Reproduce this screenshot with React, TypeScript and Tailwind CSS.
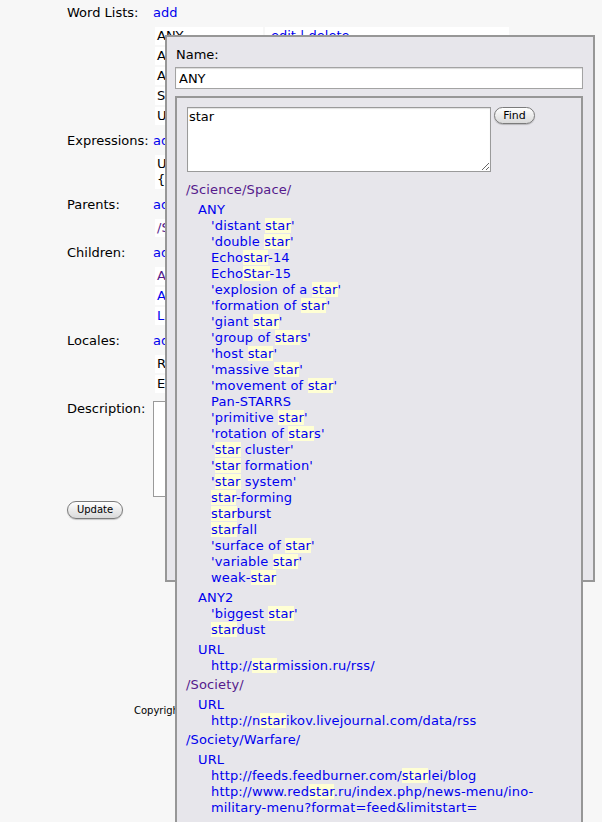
import React from "react";

const LINK = "text-[#0000ee]";
const VISITED = "text-[#551a8b]";

interface WordList {
  name: string;
  words: string[];
}

interface Category {
  path: string;
  visited: boolean;
  lists: WordList[];
}

const TREE: Category[] = [
  {
    path: "/Science/Space/",
    visited: true,
    lists: [
      {
        name: "ANY",
        words: [
          "'distant star'",
          "'double star'",
          "Echostar-14",
          "EchoStar-15",
          "'explosion of a star'",
          "'formation of star'",
          "'giant star'",
          "'group of stars'",
          "'host star'",
          "'massive star'",
          "'movement of star'",
          "Pan-STARRS",
          "'primitive star'",
          "'rotation of stars'",
          "'star cluster'",
          "'star formation'",
          "'star system'",
          "star-forming",
          "starburst",
          "starfall",
          "'surface of star'",
          "'variable star'",
          "weak-star",
        ],
      },
      { name: "ANY2", words: ["'biggest star'", "stardust"] },
      { name: "URL", words: ["http://starmission.ru/rss/"] },
    ],
  },
  {
    path: "/Society/",
    visited: true,
    lists: [{ name: "URL", words: ["http://nstarikov.livejournal.com/data/rss"] }],
  },
  {
    path: "/Society/Warfare/",
    visited: false,
    lists: [
      {
        name: "URL",
        words: [
          "http://feeds.feedburner.com/starlei/blog",
          "http://www.redstar.ru/index.php/news-menu/ino-military-menu?format=feed&limitstart=",
        ],
      },
    ],
  },
];

// highlight the searched term, the way the find result shows it
function Mark({ text }: { text: string }) {
  if (text === "Pan-STARRS") return <>{text}</>;
  const i = text.toLowerCase().indexOf("star");
  if (i < 0) return <>{text}</>;
  return (
    <>
      {text.slice(0, i)}
      <span className="bg-[#ffffd4]">{text.slice(i, i + 4)}</span>
      {text.slice(i + 4)}
    </>
  );
}

type Cell = { text: string; cls?: string };

function Section({ label, rows, widths }: { label: string; rows: Cell[][]; widths: string[] }) {
  return (
    <div className="mb-[6px] grid grid-cols-[86px_1fr]">
      <div>{label}</div>
      <div>
        <a className={LINK}>add</a>
        <table className="mt-[4px] border-separate border-spacing-[2px]">
          <tbody>
            {rows.map((r, i) => (
              <tr key={i}>
                {r.map((c, j) => (
                  <td key={j} className={`bg-white px-[2px] py-[1px] align-top ${widths[j]} ${c.cls ?? ""}`}>
                    {c.text.split("\n").map((line, k) => (
                      <div key={k}>{line}</div>
                    ))}
                  </td>
                ))}
              </tr>
            ))}
          </tbody>
        </table>
      </div>
    </div>
  );
}

function FindDialog() {
  return (
    <div className="absolute left-[165px] top-[35px] h-[547px] w-[430px] border-2 border-[#979797] bg-[#e7e6eb] pl-[8px] pt-[10px]">
      <div className="pl-[1px]">Name:</div>
      <input
        defaultValue="ANY"
        className="mt-[4px] block h-[22px] w-[408px] border border-[#a3a3a3] bg-white px-[3px] text-[13px] shadow-[inset_0_1px_1px_rgba(0,0,0,0.15)] outline-none"
      />
      <div className="mt-[7px] w-[408px] border-2 border-[#979797] bg-[#e7e6eb] pb-[10px] pl-[9px] pt-[9px]">
        <div className="flex items-start">
          <textarea
            defaultValue="star"
            className="ml-[1px] block h-[65px] w-[304px] border border-[#9a9a9a] bg-white px-[1px] pt-[1px] text-[13px] leading-[16px] shadow-[inset_0_1px_1px_rgba(0,0,0,0.12)] outline-none"
          />
          <button className="ml-[3px] h-[17px] w-[41px] rounded-full border border-[#7b7b7b] bg-linear-to-b from-white to-[#d9d9d9] text-[11px] leading-[15px] text-black shadow-[0_1px_1px_rgba(0,0,0,0.2)]">
            Find
          </button>
        </div>
        <div className="mt-[10px] tracking-[0.15px]">
          {TREE.map((cat, ci) => (
            <div key={cat.path} className={ci > 0 ? "mt-[3px]" : ""}>
              <a className={cat.visited ? VISITED : LINK}>{cat.path}</a>
              {cat.lists.map((l, li) => (
                <div key={li} className="mt-[4px]">
                  <div className={`ml-[12px] ${LINK}`}>{l.name}</div>
                  {l.words.map((w) => (
                    <div key={w} className={`ml-[25px] pr-[6px] ${LINK}`}>
                      <Mark text={w} />
                    </div>
                  ))}
                </div>
              ))}
            </div>
          ))}
        </div>
      </div>
    </div>
  );
}

export default function App() {
  return (
    <div className="relative h-[822px] overflow-hidden bg-[#f7f7f7] font-['DejaVu_Sans',sans-serif] text-[13px] leading-[16px] text-black">
      <div className="pl-[67px] pt-[5px]">
        <Section
          label="Word Lists:"
          widths={["w-[108px]", "w-[244px] pl-[6px]"]}
          rows={[
            [{ text: "ANY" }, { text: "edit | delete", cls: LINK }],
            [{ text: "ANY2" }, { text: "edit | delete", cls: LINK }],
            [{ text: "ANY3" }, { text: "edit | delete", cls: LINK }],
            [{ text: "SPACE" }, { text: "edit | delete", cls: LINK }],
            [{ text: "URL" }, { text: "edit | delete", cls: LINK }],
          ]}
        />
        <Section
          label="Expressions:"
          widths={["w-[300px]"]}
          rows={[[{ text: "URL ANY\n{ANY2}" }]]}
        />
        <Section label="Parents:" widths={["w-[200px]"]} rows={[[{ text: "/Science/", cls: VISITED }]]} />
        <Section
          label="Children:"
          widths={["w-[200px]"]}
          rows={[
            [{ text: "Astronomy", cls: VISITED }],
            [{ text: "Astronautics", cls: LINK }],
            [{ text: "Launches", cls: LINK }],
          ]}
        />
        <Section
          label="Locales:"
          widths={["w-[200px]"]}
          rows={[[{ text: "Russian" }], [{ text: "English" }]]}
        />
        <div className="grid grid-cols-[86px_1fr]">
          <div>Description:</div>
          <textarea className="block h-[96px] w-[300px] border border-[#9a9a9a] bg-white outline-none" />
        </div>
        <button className="mt-[4px] h-[18px] w-[56px] rounded-full border border-[#7b7b7b] bg-linear-to-b from-white to-[#d9d9d9] text-[10px] leading-[16px] text-black shadow-[0_1px_1px_rgba(0,0,0,0.2)]">
          Update
        </button>
        <div className="ml-[67px] mt-[186px] text-[10px] leading-[12px]">Copyright © 2012 Semantic Feeds</div>
      </div>
      <FindDialog />
    </div>
  );
}
